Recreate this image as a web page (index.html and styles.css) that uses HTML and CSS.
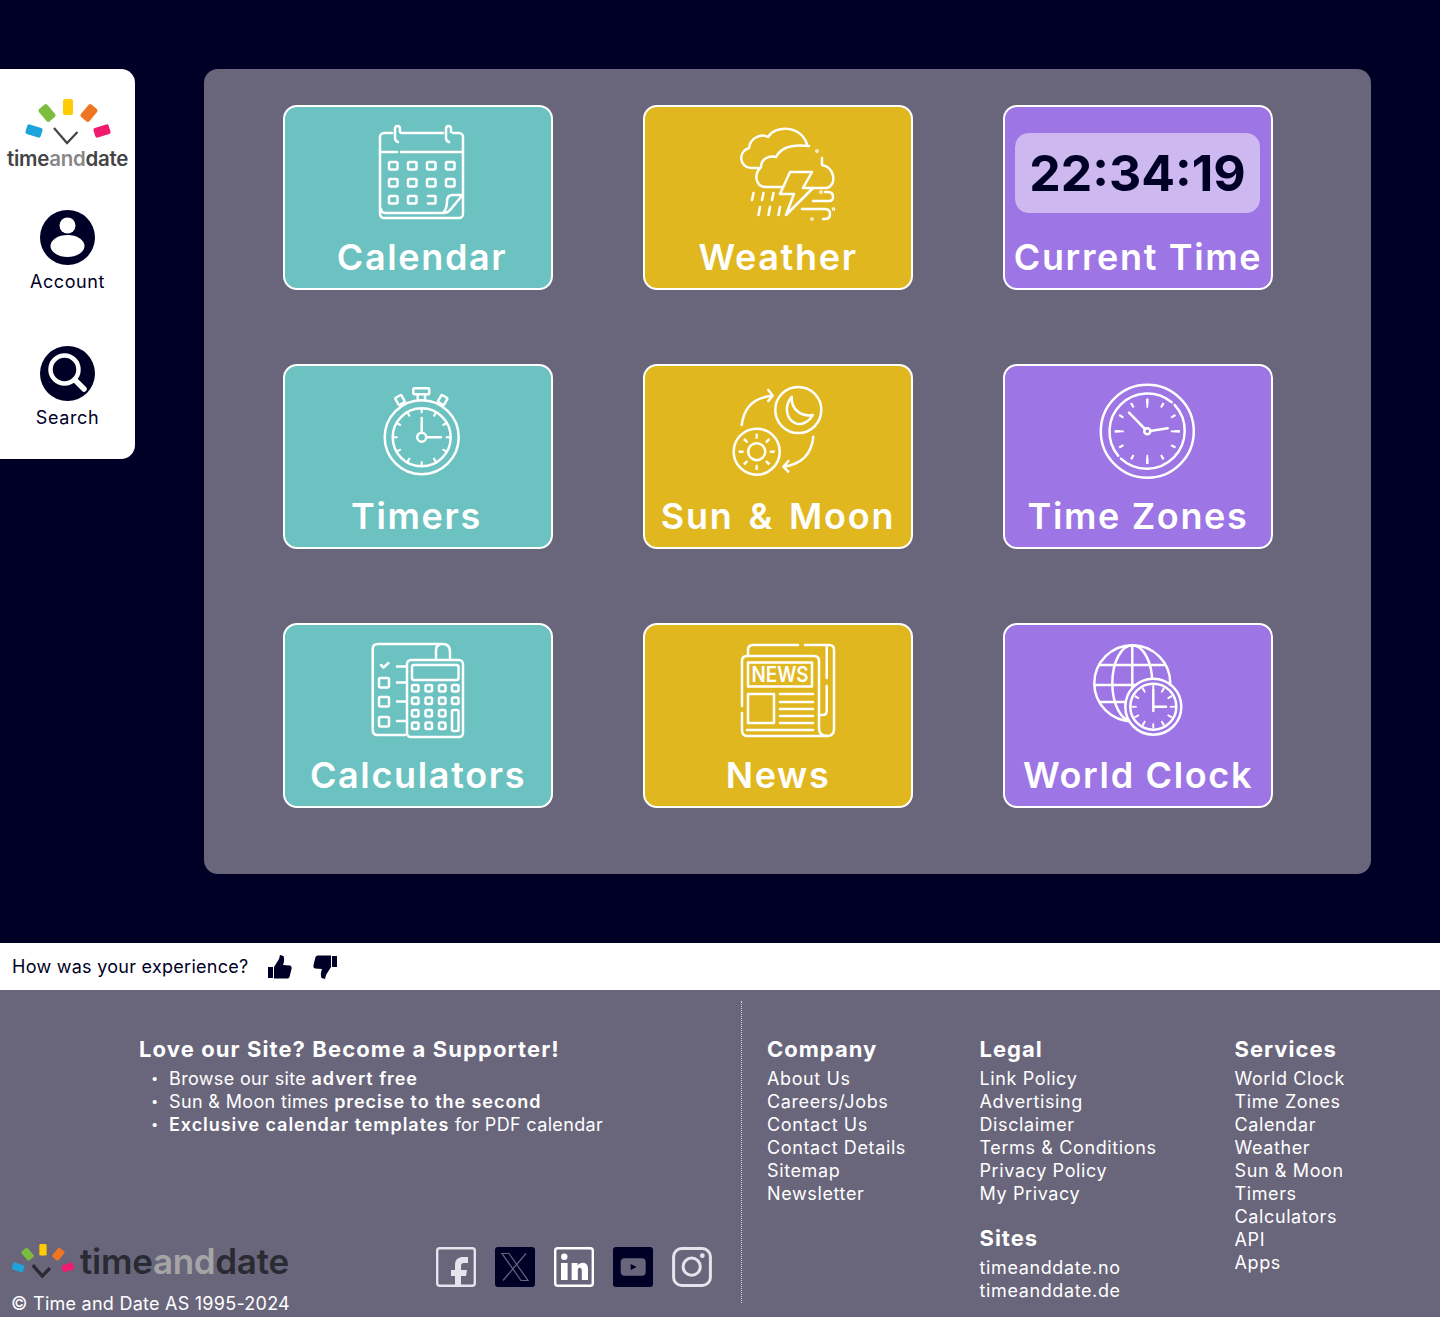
FILE: index.html
```html
<!DOCTYPE html>
<html>
<head>
<meta charset="utf-8">
<title>timeanddate</title>
<link rel="stylesheet" href="styles.css">
</head>
<body>
<svg class="defs" width="0" height="0">
  <!-- coloured rays + chevron of the logo, coords are sidebar px -->
  <symbol id="rays" viewBox="22 95 92 52">
    <rect x="63" y="99" width="10" height="16" rx="2" fill="#fc0"/>
    <rect x="41.5" y="105" width="11" height="16" rx="2" fill="#7cbd3f" transform="rotate(-40 47 113)"/>
    <rect x="83.5" y="105" width="11" height="16" rx="2" fill="#ee7623" transform="rotate(40 89 113)"/>
    <rect x="29" y="123" width="10" height="16" rx="2" fill="#1fa3dc" transform="rotate(-72 34 131)"/>
    <rect x="97" y="123" width="10" height="16" rx="2" fill="#ee1b6f" transform="rotate(72 102 131)"/>
    <path d="M54 128 L67 143 L77.5 132" fill="none" stroke="currentColor"/>
  </symbol>
</svg>

<div class="top">
  <nav class="side">
    <svg class="side-rays"><use href="#rays"/></svg>
    <div class="wordmark side-word">time<span>and</span>date</div>
    <a class="side-item side-account">
      <svg viewBox="0 0 55 55" width="55" height="55">
        <circle cx="27.5" cy="27.5" r="27.5" fill="#000027"/>
        <circle cx="27.5" cy="15.5" r="8" fill="#fff"/>
        <ellipse cx="27.5" cy="36" rx="17" ry="11" fill="#fff"/>
      </svg>
      <span>Account</span>
    </a>
    <a class="side-item side-search">
      <svg viewBox="0 0 55 55" width="55" height="55">
        <circle cx="27.5" cy="27.5" r="27.5" fill="#000027"/>
        <circle cx="24.5" cy="23.5" r="14" fill="none" stroke="#fff" stroke-width="4.5"/>
        <path d="M35 34 L44 43" stroke="#fff" stroke-width="5.5" stroke-linecap="round"/>
      </svg>
      <span>Search</span>
    </a>
  </nav>

  <main class="panel">
    <a class="card teal">
      <svg class="ico" viewBox="2 2 266 125">
        <path d="M109 28 H101 a4 4 0 0 0 -4 4 V109 a4 4 0 0 0 4 4 H176 a4 4 0 0 0 4 -4 V32 a4 4 0 0 0 -4 -4 H170 M118 28 H160"/>
        <path d="M115 37 q-3 -1 -3 -4 V24 q0 -3 2.5 -3 q2.5 0 2.5 3 V27 M166 37 q-3 -1 -3 -4 V24 q0 -3 2.5 -3 q2.5 0 2.5 3 V27"/>
        <path d="M98 47 H114 M118 47 H179"/>
        <rect x="106" y="57" width="8.5" height="7.5" rx="1.5"/><rect x="125" y="57" width="8.5" height="7.5" rx="1.5"/><rect x="144" y="57" width="8.5" height="7.5" rx="1.5"/><rect x="163" y="57" width="8.5" height="7.5" rx="1.5"/>
        <rect x="106" y="74" width="8.5" height="7.5" rx="1.5"/><rect x="125" y="74" width="8.5" height="7.5" rx="1.5"/><rect x="144" y="74" width="8.5" height="7.5" rx="1.5"/><rect x="163" y="74" width="8.5" height="7.5" rx="1.5"/>
        <rect x="106" y="91" width="8.5" height="7.5" rx="1.5"/><rect x="125" y="91" width="8.5" height="7.5" rx="1.5"/>
        <path d="M145 91 H151.5 q1 0 1 1 V97.5 q0 1 -1 1 H145"/>
        <path d="M98 104 q0 4 5 4 H160 q5 0 8 -4 L179.5 90 H170 q-6 0 -6 6 q0 8 -4 12"/>
      </svg>
      <span class="label label-shift">Calendar</span>
    </a>

    <a class="card yellow">
      <svg class="ico" viewBox="2 2 266 125">
        <path d="M115 63 H108 C97 63 94 47 106 43 C107 33 118 28 125 32 C132 20 157 20 164 39"/>
        <path d="M140 82 H123 C113 82 110 70 118 62 C118 54 126 50 133 52 C138 42 150 39 166 41 M179 53 V60 C192 62 194 80 184 83 H170"/>
        <circle cx="174" cy="46" r="0.6"/>
        <path d="M147 67 H169 L160 83 H170 L143 110 L151 89 H137 Z"/>
        <path d="M110.5 88 L109 95 M120.5 88 L119 95 M130.5 88 L129 95 M117 102 L115.5 110 M127 102 L125.5 110 M137 102 L135.5 110"/>
        <path d="M170 96 H186 q4 0 4 -4 q0 -5 -5 -5 h-3"/>
        <path d="M159 104 H182 q5 0 5 5 q0 5 -5 5 h-2"/>
        <circle cx="190.5" cy="104" r="0.6"/><circle cx="169" cy="114" r="0.6"/><circle cx="178" cy="87" r="0.6"/>
      </svg>
      <span class="label">Weather</span>
    </a>

    <a class="card purple">
      <div class="clock-slot"><div class="clock-pill">22:34:19</div></div>
      <span class="label">Current Time</span>
    </a>

    <a class="card teal">
      <svg class="ico" viewBox="2 2 266 125">
        <circle cx="138.7" cy="73.3" r="37"/>
        <circle cx="138.7" cy="73.3" r="29"/>
        <rect x="130.3" y="24.3" width="16" height="6" rx="1"/>
        <path d="M134.7 30.3 V36 M142 30.3 V36"/>
        <rect x="113.5" y="32" width="7" height="8" rx="1" transform="rotate(-30 117 36)"/>
        <rect x="156.2" y="32" width="7" height="8" rx="1" transform="rotate(30 159.7 36)"/>
        <circle class="ticks" cx="138.7" cy="73.3" r="26.5" pathLength="120" stroke-dasharray="1.6 8.4" stroke-dashoffset="0.8"/>
        <circle cx="138.7" cy="73.3" r="4.5"/>
        <path d="M138.7 54 V68.5 M143.5 73.3 H158"/>
      </svg>
      <span class="label label-back">Timers</span>
    </a>

    <a class="card yellow">
      <svg class="ico" viewBox="2 2 266 125">
        <circle cx="155.3" cy="46" r="23"/>
        <circle cx="113.7" cy="87.7" r="23"/>
        <circle cx="113.7" cy="87.7" r="8.5"/>
        <circle class="ticks" cx="113.7" cy="87.7" r="15.5" pathLength="40" stroke-dasharray="1 4" stroke-dashoffset="0.5"/>
        <path d="M148.7 32.7 C141 42 143 55 152 59 C158 62 166 58 169.7 51 C160 53 148 47 148.7 32.7 Z"/>
        <path d="M98.7 61 Q102 34 129.7 31.7 M125.3 26 L129.7 31.7 L125.3 37"/>
        <path d="M170.3 72.7 Q167.7 99.3 140.3 102.7 M145.3 97 L140.3 102.7 L145.3 107.7"/>
      </svg>
      <span class="label label-wide">Sun &amp; Moon</span>
    </a>

    <a class="card purple">
      <svg class="ico" viewBox="2 2 266 125">
        <circle cx="144.3" cy="67.3" r="46.5"/>
        <path d="M168.7 38.2 A38 38 0 0 0 115.2 91.7 M171.6 40.9 A38 38 0 0 1 117.9 94.6"/>
        <circle class="ticks" cx="144.3" cy="67.3" r="30" pathLength="120" stroke-dasharray="1.4 8.6" stroke-dashoffset="0.7"/>
        <circle class="ticks-long" cx="144.3" cy="67.3" r="28" pathLength="120" stroke-dasharray="1.4 28.6" stroke-dashoffset="0.7"/>
        <circle cx="144.3" cy="67.3" r="3"/>
        <path d="M142 65 L126 48.7 M147.3 67 L164.7 64.3"/>
      </svg>
      <span class="label">Time Zones</span>
    </a>

    <a class="card teal">
      <svg class="ico" viewBox="2 2 266 125">
        <path d="M122 112 H95 q-5.3 0 -5.3 -5.3 V26 q0 -5 5.3 -5 H160 q7 0 7 8 V35 M153 35 V27 q0 -6 7 -6"/>
        <path d="M98 42 L100.5 44.5 L105.5 40"/>
        <rect x="96" y="55" width="10" height="9.5" rx="1.5"/><rect x="96" y="74" width="10" height="9.5" rx="1.5"/><rect x="96" y="94" width="10" height="9.5" rx="1.5"/>
        <path d="M114 43.5 H123 M114 59.5 H123 M114 78.5 H123 M114 98 H123"/>
        <rect x="124" y="37" width="56" height="77" rx="4"/>
        <rect x="129" y="42" width="46.5" height="15" rx="2"/>
        <rect x="129" y="62" width="6.5" height="6.5" rx="1.5"/><rect x="142.5" y="62" width="6.5" height="6.5" rx="1.5"/><rect x="156" y="62" width="6.5" height="6.5" rx="1.5"/><rect x="169" y="62" width="6.5" height="6.5" rx="1.5"/>
        <rect x="129" y="74.5" width="6.5" height="6.5" rx="1.5"/><rect x="142.5" y="74.5" width="6.5" height="6.5" rx="1.5"/><rect x="156" y="74.5" width="6.5" height="6.5" rx="1.5"/><rect x="169" y="74.5" width="6.5" height="6.5" rx="1.5"/>
        <rect x="129" y="87" width="6.5" height="6.5" rx="1.5"/><rect x="142.5" y="87" width="6.5" height="6.5" rx="1.5"/><rect x="156" y="87" width="6.5" height="6.5" rx="1.5"/>
        <rect x="129" y="99.5" width="6.5" height="6.5" rx="1.5"/><rect x="142.5" y="99.5" width="6.5" height="6.5" rx="1.5"/><rect x="156" y="99.5" width="6.5" height="6.5" rx="1.5"/>
        <rect x="169" y="87" width="6.5" height="21" rx="1.5"/>
      </svg>
      <span class="label">Calculators</span>
    </a>

    <a class="card yellow">
      <svg class="ico" viewBox="2 2 266 125">
        <path d="M105 32 V27 q0 -5 5 -5 H155 M162 22 H186 q5 0 5 5 V106 q0 7 -7 7 q-8 0 -8 -8 V92"/>
        <path d="M183.7 24 V55 M183.7 63 V88 q0 4 -4 4 H176"/>
        <path d="M176 92 V38 q0 -5 -5 -5 H104 q-5 0 -5 5 V83 M99 90 V107 q0 6 5 6 H184"/>
        <rect x="105" y="39.5" width="64" height="24"/>
        <text class="news-word" x="137" y="58.5" text-anchor="middle" textLength="57" lengthAdjust="spacingAndGlyphs">NEWS</text>
        <rect x="105" y="71" width="26" height="29"/>
        <path d="M137 71 H170 M137 79 H170 M137 86 H170 M137 93 H170 M137 100 H170 M104 107 H170"/>
      </svg>
      <span class="label">News</span>
    </a>

    <a class="card purple">
      <svg class="ico" viewBox="2 2 266 125">
        <circle cx="129.3" cy="60.3" r="38"/>
        <ellipse cx="129.3" cy="60.3" rx="20" ry="38"/>
        <path d="M129.3 22 V98 M97 42 H161.5 M91.5 62 H167 M97 79 H161.5"/>
        <circle class="disc" cx="150.3" cy="83.7" r="28"/>
        <circle cx="150.3" cy="83.7" r="23"/>
        <circle class="ticks" cx="150.3" cy="83.7" r="19" pathLength="120" stroke-dasharray="2 8" stroke-dashoffset="1"/>
        <path d="M150.3 67 V88 M150.3 83.7 H163"/>
      </svg>
      <span class="label">World Clock</span>
    </a>
  </main>
</div>

<div class="feedback">
  <span>How was your experience?</span>
  <svg class="thumb" viewBox="0 0 24 25" width="24" height="25"><path d="M0 12 H5 V23 H0 Z M6 12 L11 4 L12 0 L15.5 1 Q17 5 15 10 L22 10.5 Q24 11 23.5 14 L21.5 22 Q21 23.5 19 23.5 H6 Z" fill="#000027"/></svg>
  <svg class="thumb thumb-down" viewBox="0 0 24 25" width="24" height="25"><path d="M0 12 H5 V23 H0 Z M6 12 L11 4 L12 0 L15.5 1 Q17 5 15 10 L22 10.5 Q24 11 23.5 14 L21.5 22 Q21 23.5 19 23.5 H6 Z" fill="#000027" transform="rotate(180 12 12)"/></svg>
</div>

<footer class="footer">
  <div class="foot-left">
    <div class="support">
      <h3>Love our Site? Become a Supporter!</h3>
      <ul>
        <li>Browse our site <b>advert free</b></li>
        <li>Sun &amp; Moon times <b>precise to the second</b></li>
        <li><b>Exclusive calendar templates</b> for PDF calendar</li>
      </ul>
    </div>
    <div class="foot-bottom">
      <div class="foot-brand">
        <div class="foot-logo">
          <svg class="foot-rays"><use href="#rays"/></svg>
          <div class="wordmark foot-word">time<span>and</span>date</div>
        </div>
        <div class="copy">© Time and Date AS 1995-2024</div>
      </div>
      <div class="social">
        <svg viewBox="0 0 40 40" width="40" height="40">
          <rect x="1.2" y="1.2" width="37.6" height="37.6" rx="2.5" fill="none" stroke="#e4e4ec" stroke-width="2.4"/>
          <path d="M19 38 V29 H15 V23 H19 V18 C19 12 23 10 27 10 H32 V16 H28 C26 16 25 17 25 19 V23 H31 L30 29 H25 V38 Z" fill="#e4e4ec"/>
        </svg>
        <svg viewBox="0 0 40 40" width="40" height="40">
          <rect width="40" height="40" rx="3" fill="#000027"/>
          <path d="M7 6.5 H14 L33 33.5 H26 Z M31 6.5 L8 33.5" fill="none" stroke="#69667b" stroke-width="1.2"/>
        </svg>
        <svg viewBox="0 0 40 40" width="40" height="40">
          <rect x="1.2" y="1.2" width="37.6" height="37.6" rx="2.5" fill="none" stroke="#fff" stroke-width="2.4"/>
          <circle cx="10.3" cy="9.7" r="3.2" fill="#fff"/>
          <rect x="7" y="16" width="6.6" height="17" fill="#fff"/>
          <path d="M17.6 16 H23.6 V18.5 C25 16.5 27 15.6 29 15.8 C32.5 16 34 18.5 34 22 V33 H27.8 V23.5 C27.8 21.5 27 20.7 25.7 20.7 C24.4 20.7 23.8 21.7 23.8 23.5 V33 H17.6 Z" fill="#fff"/>
        </svg>
        <svg viewBox="0 0 40 40" width="40" height="40">
          <rect width="40" height="40" rx="3" fill="#000027"/>
          <rect x="7.7" y="11.3" width="25" height="17.4" rx="4" fill="#69667b"/>
          <path d="M17.7 17 L23.7 20 L17.7 23 Z" fill="#000027"/>
        </svg>
        <svg viewBox="0 0 40 40" width="40" height="40">
          <rect x="1.6" y="1.6" width="36.8" height="36.8" rx="8" fill="none" stroke="#e4e4ec" stroke-width="3"/>
          <circle cx="19.7" cy="19.7" r="8.6" fill="none" stroke="#e4e4ec" stroke-width="3"/>
          <circle cx="30.3" cy="8.7" r="2.4" fill="#e4e4ec"/>
        </svg>
      </div>
    </div>
  </div>

  <div class="foot-links">
    <div class="col col-company">
      <h4>Company</h4>
      <a>About Us</a><a>Careers/Jobs</a><a>Contact Us</a><a>Contact Details</a><a>Sitemap</a><a>Newsletter</a>
    </div>
    <div class="col col-legal">
      <h4>Legal</h4>
      <a>Link Policy</a><a>Advertising</a><a>Disclaimer</a><a>Terms &amp; Conditions</a><a>Privacy Policy</a><a>My Privacy</a>
      <h4 class="sites">Sites</h4>
      <a>timeanddate.no</a><a>timeanddate.de</a>
    </div>
    <div class="col">
      <h4>Services</h4>
      <a>World Clock</a><a>Time Zones</a><a>Calendar</a><a>Weather</a><a>Sun &amp; Moon</a><a>Timers</a><a>Calculators</a><a>API</a><a>Apps</a>
    </div>
  </div>
</footer>
</body>
</html>
```

FILE: styles.css
```css
* { box-sizing: border-box; }
body { margin: 0; background: #000027; font-family: Inter, "Noto Sans", sans-serif; color: #fff; }
.defs { position: absolute; }

/* top area: sidebar and tile panel */
.top { display: flex; align-items: flex-start; height: 943px; padding-top: 69px; }

.side {
  width: 135px; height: 390px; background: #fff; border-radius: 0 14px 14px 0;
  padding-top: 26px; display: flex; flex-direction: column; align-items: center; color: #000027;
}
.side-rays { width: 92px; height: 52px; color: #444; stroke-width: 2.2; }
.wordmark { font-weight: 600; color: #444; white-space: nowrap; }
.wordmark span { color: #888; }
.side-word { font-size: 20.5px; line-height: 24px; letter-spacing: -0.3px; }
.side-item { display: flex; flex-direction: column; align-items: center; }
.side-item span { font-size: 18px; line-height: 24px; margin-top: 5px; letter-spacing: 0.6px; }
.side-account { margin-top: 39px; }
.side-search { margin-top: 52px; }

.panel {
  width: 1167px; height: 805px; margin-left: 69px; background: #69667b; border-radius: 14px;
  padding: 36px 0 0 79px;
  display: grid; grid-template-columns: repeat(3, 270px); grid-template-rows: repeat(3, 185px);
  column-gap: 90px; row-gap: 74px;
}

.card { border: 2px solid #fff; border-radius: 14px; display: flex; flex-direction: column; align-items: center; overflow: hidden; }
.teal { background: #6cc2c0; --tile: #6cc2c0; }
.yellow { background: #e1b720; --tile: #e1b720; }
.purple { background: #9d75e4; --tile: #9d75e4; }

.ico {
  display: block; width: 266px; height: 125px; flex: none;
  fill: none; stroke: #fff; stroke-width: 2.5; stroke-linecap: round; stroke-linejoin: round;
}
.ico .ticks { stroke-width: 5; stroke-linecap: butt; }
.ico .ticks-long { stroke-width: 9; stroke-linecap: butt; }
.ico .disc { fill: var(--tile); }
.ico .news-word { fill: #fff; stroke: none; font-size: 21px; font-weight: 600; font-family: Inter, sans-serif; }

.label { margin-top: 2px; font-size: 36px; line-height: 46px; font-weight: 600; letter-spacing: 1.65px; white-space: nowrap; }
.label-shift { margin-left: 8px; }
.label-back { margin-right: 3px; }
.label-wide { word-spacing: 4px; letter-spacing: 1.8px; }

.clock-slot { width: 100%; height: 125px; padding: 26px 11px 0 10px; flex: none; }
.clock-pill {
  height: 80px; background: #cdb8f0; border-radius: 14px; color: #000027;
  font-size: 50px; font-weight: 700; line-height: 80px; text-align: center;
}

/* feedback strip */
.feedback {
  height: 47px; background: #fff; color: #000027; padding-left: 12px;
  display: flex; align-items: center; font-size: 18px; letter-spacing: 0.27px;
}
.thumb { margin-left: 19px; margin-top: 1px; }
.thumb-down { margin-left: 21px; }

/* footer */
.footer { height: 327px; background: #69667b; display: flex; align-items: flex-start; font-size: 18px; letter-spacing: 0.62px; line-height: 23px; }
.foot-left {
  width: 742px; height: 302px; margin-top: 11px; border-right: 1px dotted #d8d8e0;
  display: flex; flex-direction: column; justify-content: space-between;
}
.support { padding: 36px 0 0 139px; }
.support h3 { margin: 0; font-size: 22px; line-height: 24px; font-weight: 700; letter-spacing: 1.1px; }
.support ul { margin: 6px 0 0; padding: 0 0 0 30px; list-style: none; letter-spacing: 0.35px; }
.support li { position: relative; }
.support li::before { content: "•"; position: absolute; left: -18px; font-size: 13px; }
.support b { font-weight: 600; letter-spacing: 0.95px; }

.foot-bottom { display: flex; align-items: flex-end; }
.foot-brand { padding-left: 11px; width: 436px; }
.foot-logo { display: flex; align-items: center; height: 40px; }
.foot-rays { width: 68px; height: 38px; color: #2a2a33; stroke-width: 4.5; flex: none; margin: 0 0 5px -2px; }
.foot-word { font-size: 35px; line-height: 40px; color: #2a2a33; margin: -2px 0 0 3px; letter-spacing: -0.3px; }
.foot-word span { color: #a5a5a5; }
.copy { font-size: 18px; line-height: 24px; margin-top: 10px; letter-spacing: 0.25px; white-space: nowrap; margin-bottom: -13px; }
.social { display: flex; gap: 19px; margin-bottom: 16px; }

.foot-links { display: flex; padding: 47px 0 0 25px; }
.col { display: flex; flex-direction: column; }
.col-company { width: 212.5px; }
.col-legal { width: 255px; }
.col h4 { margin: 0 0 6px; font-size: 22px; line-height: 24px; font-weight: 700; letter-spacing: 1px; }
.col h4.sites { margin-top: 21px; margin-bottom: 6px; }
.col a { line-height: 23px; white-space: nowrap; }
```
